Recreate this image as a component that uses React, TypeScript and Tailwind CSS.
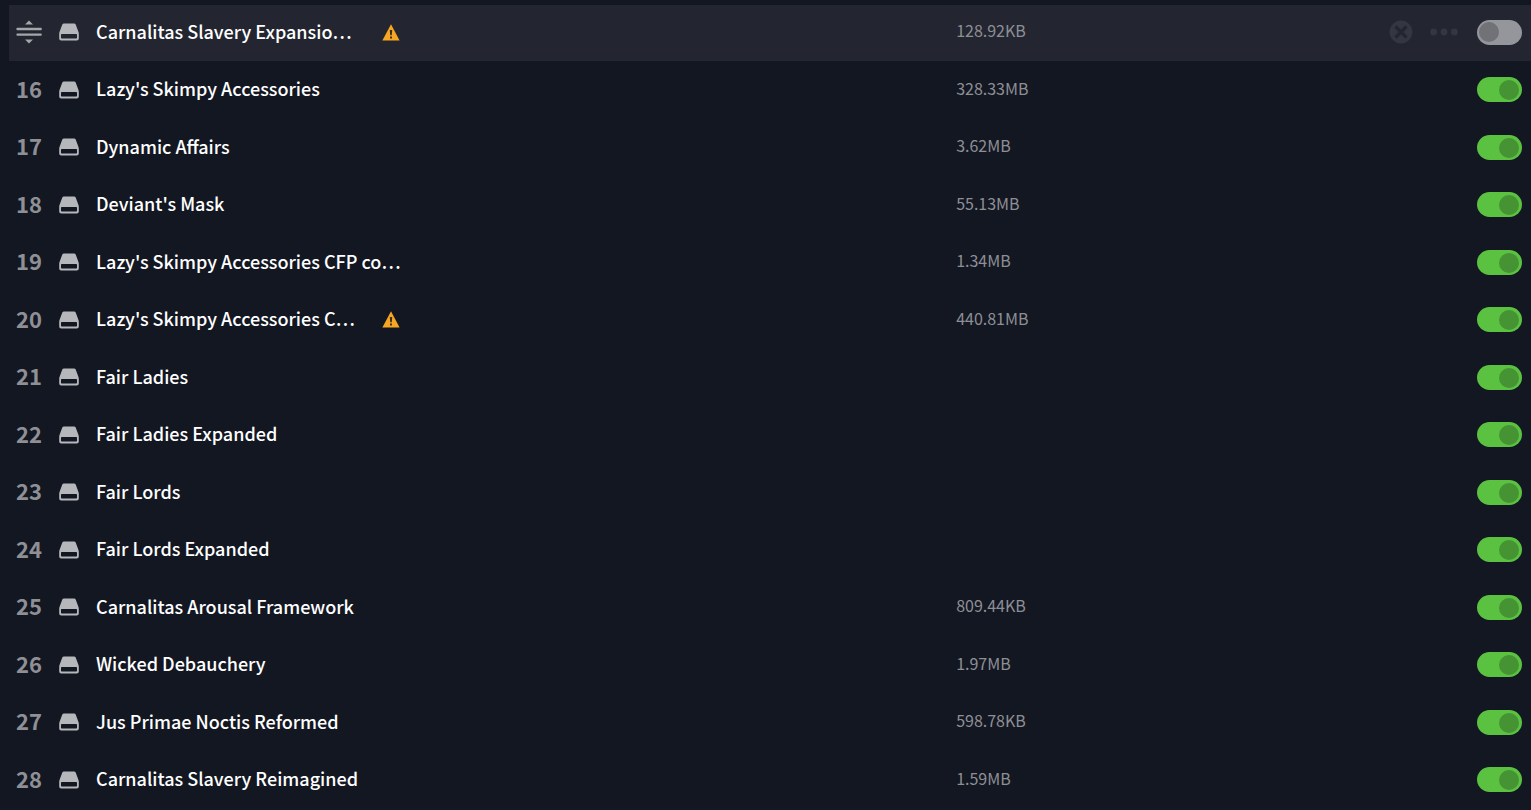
import { useState } from "react";

type Mod = {
  position: number;
  name: string;
  size?: string;
  enabled: boolean;
  warning?: boolean;
  active?: boolean;
};

const MODS: Mod[] = [
  { position: 15, name: "Carnalitas Slavery Expansio…", size: "128.92KB", enabled: false, warning: true, active: true },
  { position: 16, name: "Lazy's Skimpy Accessories", size: "328.33MB", enabled: true },
  { position: 17, name: "Dynamic Affairs", size: "3.62MB", enabled: true },
  { position: 18, name: "Deviant's Mask", size: "55.13MB", enabled: true },
  { position: 19, name: "Lazy's Skimpy Accessories CFP co…", size: "1.34MB", enabled: true },
  { position: 20, name: "Lazy's Skimpy Accessories C…", size: "440.81MB", enabled: true, warning: true },
  { position: 21, name: "Fair Ladies", enabled: true },
  { position: 22, name: "Fair Ladies Expanded", enabled: true },
  { position: 23, name: "Fair Lords", enabled: true },
  { position: 24, name: "Fair Lords Expanded", enabled: true },
  { position: 25, name: "Carnalitas Arousal Framework", size: "809.44KB", enabled: true },
  { position: 26, name: "Wicked Debauchery", size: "1.97MB", enabled: true },
  { position: 27, name: "Jus Primae Noctis Reformed", size: "598.78KB", enabled: true },
  { position: 28, name: "Carnalitas Slavery Reimagined", size: "1.59MB", enabled: true },
];

function DragIcon() {
  return (
    <svg width="26" height="24" viewBox="0 0 26 24" fill="currentColor" aria-hidden="true">
      <path d="M13 0.5 17 4.4H9zM13 23.5 9 19.6h8z" />
      <rect x="0.4" y="7.8" width="25.4" height="2.4" rx="1" />
      <rect x="0.4" y="13.4" width="25.4" height="2.4" rx="1" />
    </svg>
  );
}

function DriveIcon() {
  return (
    <svg width="20" height="18" viewBox="0 0 20 18" fill="currentColor" aria-hidden="true">
      <path
        fillRule="evenodd"
        d="M5 0.4h10c0.8 0 1.4 0.4 1.7 1.1l2.7 7.3c0.3 0.7 0.4 1.2 0.4 1.9v4.7c0 1.1-0.9 2-2 2H2.2c-1.1 0-2-0.9-2-2v-4.7c0-0.7 0.1-1.2 0.4-1.9l2.7-7.3C3.6 0.8 4.2 0.4 5 0.4zM2.7 11c-0.4 0-0.7 0.3-0.7 0.7v3c0 0.4 0.3 0.7 0.7 0.7h14.6c0.4 0 0.7-0.3 0.7-0.7v-3c0-0.4-0.3-0.7-0.7-0.7z"
      />
    </svg>
  );
}

function WarningIcon() {
  return (
    <svg width="18" height="17" viewBox="0 0 18 17" role="img" aria-label="Warning">
      <path fill="#f6a623" d="M9 0.2 17.6 16.6H0.4z" />
      <path fill="#3d2f20" d="M7.8 6h2.4l-0.4 5.3H8.2zM8 12.5h2v2H8z" />
    </svg>
  );
}

function RemoveIcon() {
  return (
    <svg width="24" height="24" viewBox="0 0 24 24" aria-hidden="true">
      <circle cx="12" cy="12" r="11.4" fill="#343742" />
      <path d="m6.5 6.5 11 11M17.5 6.5l-11 11" stroke="#232631" strokeWidth="3.2" />
    </svg>
  );
}

function MoreIcon() {
  return (
    <svg width="28" height="8" viewBox="0 0 28 8" fill="#343742" aria-hidden="true">
      <circle cx="3.6" cy="4" r="3.4" />
      <circle cx="14" cy="4" r="3.4" />
      <circle cx="24.4" cy="4" r="3.4" />
    </svg>
  );
}

function Toggle({ label, checked, onChange }: { label: string; checked: boolean; onChange: () => void }) {
  return (
    <input
      type="checkbox"
      role="switch"
      aria-label={label}
      checked={checked}
      onChange={onChange}
      className="h-[25px] w-[45px] shrink-0 cursor-pointer appearance-none rounded-full bg-[#95969b] p-0.5 before:block before:size-5 before:rounded-full before:bg-[#717277] before:content-[''] checked:bg-[#5ac141] checked:pl-[22px] checked:pt-[3px] checked:before:bg-[#469333]"
    />
  );
}

function ModRow({ mod, onToggle }: { mod: Mod; onToggle: () => void }) {
  return (
    <li className="flex pb-0.5">
      <div className={`flex flex-1 items-center pr-[9px] pb-px ${mod.active ? "bg-[#232631]" : ""}`}>
        <div className="flex w-[50px] shrink-0 pl-[7px] text-[#a5a6aa]">
          {mod.active ? (
            <button aria-label="Reorder">
              <DragIcon />
            </button>
          ) : (
            <span className="pb-1 text-[22px] leading-7 font-bold text-[#8f9096]">{mod.position}</span>
          )}
        </div>
        <span className="text-[#b6b7bb]">
          <DriveIcon />
        </span>
        <div className="flex min-w-0 flex-[1.52] items-center pl-[17px]">
          <div className="flex w-76 items-center justify-between">
            <span className="pb-[3px] text-[18px] leading-7 font-medium whitespace-nowrap text-white">{mod.name}</span>
            {mod.warning ? <WarningIcon /> : null}
          </div>
        </div>
        <div className="flex flex-1 items-center justify-end">
          <span className="mr-auto pb-1 text-[16px] leading-6 text-[#8e8f95]">{mod.size}</span>
          {mod.active ? (
            <div className="mr-[19px] flex items-center gap-[17px]">
              <button aria-label="Remove">
                <RemoveIcon />
              </button>
              <button aria-label="More options">
                <MoreIcon />
              </button>
            </div>
          ) : null}
          <Toggle label={mod.name} checked={mod.enabled} onChange={onToggle} />
        </div>
      </div>
    </li>
  );
}

export default function App() {
  const [mods, setMods] = useState(MODS);

  function toggle(position: number) {
    setMods((list) => list.map((m) => (m.position === position ? { ...m, enabled: !m.enabled } : m)));
  }

  return (
    <main className="flex min-h-screen bg-[#131722] pt-[5px] pl-[9px] font-['Noto_Sans_CJK_SC',sans-serif]">
      <ul className="grid flex-1 auto-rows-fr">
        {mods.map((m) => (
          <ModRow key={m.position} mod={m} onToggle={() => toggle(m.position)} />
        ))}
      </ul>
    </main>
  );
}
